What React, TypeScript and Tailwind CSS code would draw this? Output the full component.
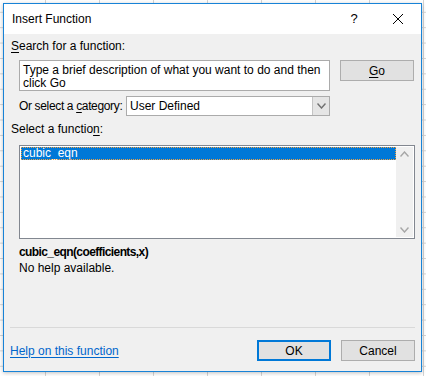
import React from 'react';

const font = { fontFamily: '"Liberation Sans", Arial, sans-serif' };

const Btn: React.FC<{ children: React.ReactNode; primary?: boolean }> = ({ children, primary }) => (
  <button
    className={
      primary
        ? 'w-[74px] h-[21px] bg-[#e1e1e1] border-2 border-[#0078d7] text-[12px] text-black flex items-center justify-center'
        : 'w-[74px] h-[21px] bg-[#e1e1e1] border border-[#adadad] text-[12px] text-black flex items-center justify-center'
    }
  >
    {children}
  </button>
);

const Chevron: React.FC<{ up?: boolean; color?: string }> = ({ up, color = '#a6a6a6' }) => (
  <svg width="9" height="6" viewBox="0 0 9 6" className="block">
    <path
      d={up ? 'M0.5 5.5 L4.5 1 L8.5 5.5' : 'M0.5 0.5 L4.5 5 L8.5 0.5'}
      fill="none"
      stroke={color}
      strokeWidth="1.4"
    />
  </svg>
);

export default function App() {
  return (
    <div
      style={font}
      className="w-[426px] h-[376px] overflow-hidden bg-white bg-[linear-gradient(to_right,#d4d4d4_1px,transparent_1px),linear-gradient(to_bottom,#d4d4d4_1px,transparent_1px)] bg-[size:54px_15.4px] bg-[position:45px_11.8px] pt-[3px] pl-[3px]"
    >
      <div className="w-[419px] h-[369px] border border-[#1883d7] bg-[#f0f0f0] flex flex-col shadow-[0_1px_4px_rgba(0,0,0,0.25)] text-[12px] text-black">
        {/* title bar */}
        <div className="h-[30px] bg-white flex items-center pl-[8px] shrink-0">
          <span className="flex-1 leading-[14px]">Insert Function</span>
          <span className="w-[10px] text-center text-[13px] leading-[14px] mr-[34px]">?</span>
          <svg width="10" height="10" viewBox="0 0 10 10" className="mr-[18px]">
            <path d="M0 0 L10 10 M10 0 L0 10" stroke="#000" strokeWidth="1" />
          </svg>
        </div>

        <div className="flex flex-col pl-[7px] pr-[6px] pt-[4px]">
          <div className="leading-[16px]">
            <span className="underline underline-offset-2">S</span>earch for a function:
          </div>

          <div className="flex items-start mt-[6px] pl-[8px]">
            <div className="w-[311px] h-[31px] bg-white border border-[#ababab] px-[3px] pt-[3px] leading-[13px]">
              Type a brief description of what you want to do and then click Go
            </div>
            <div className="ml-[10px]">
              <Btn>
                <span>
                  <span className="underline underline-offset-2">G</span>o
                </span>
              </Btn>
            </div>
          </div>

          <div className="flex items-center mt-[5px] pl-[8px] h-[20px]">
            <span className="w-[107px] shrink-0 whitespace-nowrap tracking-[-0.35px] leading-[16px]">
              Or select a <span className="underline underline-offset-2">c</span>ategory:
            </span>
            <div className="w-[204px] h-[20px] bg-white border border-[#ababab] flex">
              <span className="flex-1 pl-[3px] leading-[18px]">User Defined</span>
              <div className="w-[17px] h-full bg-[#e5e5e5] border-l border-[#c4c4c4] flex items-center justify-center">
                <Chevron color="#707070" />
              </div>
            </div>
          </div>

          <div className="leading-[16px] mt-[5px]">
            Select a functio<span className="underline underline-offset-2">n</span>:
          </div>

          <div className="ml-[8px] mt-[8px] w-[396px] h-[94px] bg-white border border-[#828790] flex p-px">
            <div className="flex-1">
              <div className="h-[13px] bg-[#0078d7] text-white leading-[12px] pl-[2px] outline outline-1 outline-dotted outline-[#f0a040] -outline-offset-1">
                cubic_eqn
              </div>
            </div>
            <div className="w-[17px] bg-[#f0f0f0] flex flex-col items-center justify-between py-[4px]">
              <Chevron up />
              <Chevron />
            </div>
          </div>

          <div className="pl-[8px] mt-[5px] font-bold tracking-[-0.6px] leading-[16px]">cubic_eqn(coefficients,x)</div>
          <div className="pl-[8px] leading-[16px]">No help available.</div>

          <div className="mt-[51px] h-px bg-[#d9d9d9] -ml-px w-[405px]" />

          <div className="flex items-center mt-[12px] -ml-px">
            <a className="flex-1 text-[#0066cc] underline underline-offset-2 leading-[16px]">Help on this function</a>
            <Btn primary>OK</Btn>
            <div className="ml-[10px]">
              <Btn>Cancel</Btn>
            </div>
          </div>
        </div>
      </div>
    </div>
  );
}
